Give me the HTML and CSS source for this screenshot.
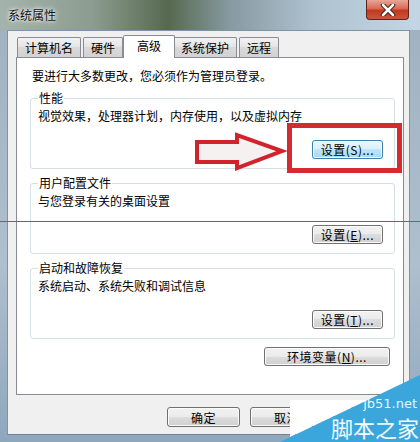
FILE: index.html
```html
<!DOCTYPE html>
<html lang="zh-CN">
<head>
  <meta charset="UTF-8" />
  <title>系统属性</title>
  <link rel="stylesheet" href="styles.css">
</head>
<body>
  <div class="window">
    <div class="titlebar">
      <span class="title">系统属性</span>
      <div class="close-btn">
        <svg width="16" height="12" viewBox="0 0 16 12"><path d="M3 1 L13 11 M13 1 L3 11" stroke="#3a1a14" stroke-width="4.5" stroke-linecap="round"/><path d="M3 1 L13 11 M13 1 L3 11" stroke="#fff" stroke-width="2.5" stroke-linecap="round"/></svg>
      </div>
    </div>

    <div class="client">
      <div class="tabs">
        <div class="tab">计算机名</div>
        <div class="tab">硬件</div>
        <div class="tab active">高级</div>
        <div class="tab">系统保护</div>
        <div class="tab">远程</div>
      </div>

      <div class="page">
        <p class="intro">要进行大多数更改，您必须作为管理员登录。</p>

        <fieldset class="group">
          <legend>性能</legend>
          <p>视觉效果，处理器计划，内存使用，以及虚拟内存</p>
          <div class="group-actions"><button class="btn focus">设置(S)...</button></div>
        </fieldset>

        <fieldset class="group">
          <legend>用户配置文件</legend>
          <p>与您登录有关的桌面设置</p>
          <div class="group-actions"><button class="btn">设置(<u>E</u>)...</button></div>
        </fieldset>

        <fieldset class="group">
          <legend>启动和故障恢复</legend>
          <p>系统启动、系统失败和调试信息</p>
          <div class="group-actions"><button class="btn">设置(<u>T</u>)...</button></div>
        </fieldset>

        <div class="env-row"><button class="btn wide">环境变量(<u>N</u>)...</button></div>
      </div>

      <div class="footer">
        <button class="btn">确定</button>
        <button class="btn">取消</button>
        <!-- third button sits fully under the watermark -->
        <button class="btn"></button>
      </div>
    </div>

    <!-- annotations drawn over the screenshot -->
    <div class="mark-line"></div>
    <div class="mark-box"></div>
    <svg class="mark-arrow" width="100" height="48" viewBox="0 0 100 48">
      <polygon points="7,14 47,14 47,7 92,23 47,40 47,34 7,34" fill="#f6f1f1" stroke="#d0232b" stroke-width="4" stroke-linejoin="miter"/>
    </svg>

    <div class="watermark">
      <svg width="140" height="70" viewBox="0 0 140 70">
        <polygon points="10,28 88,28 10,65" fill="#ffffff"/>
        <polygon points="0,70 140,3 140,70" fill="#3aa6dc"/>
      </svg>
      <span class="wm-url">jb51.net</span>
      <span class="wm-name">脚本之家</span>
    </div>
  </div>
</body>
</html>
```

FILE: styles.css
```css
body {
  margin: 0;
  font-family: "Noto Sans CJK SC", "Liberation Sans", sans-serif;
  font-size: 12px;
  color: #000;
}
.window {
  position: relative;
  width: 420px;
  height: 442px;
  overflow: hidden;
  background: linear-gradient(to bottom, #9fb1c0, #aebfce 60%, #8fa7bd);
}
.titlebar {
  height: 30px;
  display: flex;
  justify-content: space-between;
  align-items: flex-start;
  background: linear-gradient(90deg, #a4b3ac 0%, #8d9c90 22%, #56694f 40%, #889ba3 55%, #aec2d0 75%, #c4d6e3 100%);
}
.title {
  margin: 8px 0 0 8px;
  line-height: 14px;
  color: #111;
  text-shadow: 0 0 6px #fff, 0 0 3px #fff;
}
.close-btn {
  width: 41px;
  height: 19px;
  margin-right: 11px;
  border: 1px solid #5e241b;
  border-top: none;
  border-radius: 0 0 4px 4px;
  background: linear-gradient(to bottom, #eaa597 0%, #d86a55 45%, #c2391f 55%, #c9563f 100%);
  display: flex;
  justify-content: center;
  align-items: center;
}
.client {
  height: 403px;
  margin: 0 10px 0 7px;
  padding: 0 5px 0 8px;
  background: #f0f0f0;
  border: 1px solid #7f93a6;
  border-bottom-color: #6d8298;
}
.tabs {
  display: flex;
  align-items: flex-end;
  height: 26px;
  padding-left: 1px;
}
.tab {
  height: 19px;
  line-height: 19px;
  padding: 0 7px;
  margin-right: 2px;
  border: 1px solid #898c95;
  border-bottom: none;
  border-radius: 2px 2px 0 0;
  background: linear-gradient(to bottom, #f3f3f3, #e3e3e3 50%, #d9d9d9 50%, #d2d2d2);
}
.tab.active {
  height: 22px;
  line-height: 20px;
  padding: 0 13px;
  margin: 0 0 -1px -2px;
  background: #fff;
  position: relative;
}
.tab.active + .tab {
  margin-left: -2px;
}
.page {
  width: 386px;
  height: 325px;
  background: #fff;
  border: 1px solid #898c95;
  padding: 11px 0 0;
}
.intro {
  margin: 0 0 8px 15px;
  line-height: 14px;
}
.group {
  width: 345px;
  margin: 0 12px 7px 13px;
  padding: 0 11px 9px 7px;
  border: 1px solid #d5dfe5;
  border-radius: 3px;
}
.group legend {
  padding: 0 1px;
  line-height: 14px;
}
.group p {
  margin: 4px 0 0;
  line-height: 14px;
}
.group-actions {
  display: flex;
  justify-content: flex-end;
  margin-top: 17px;
}
.btn {
  height: 19px;
  min-width: 71px;
  padding: 0 8px;
  font-family: inherit;
  font-size: 12px;
  line-height: 15px;
  letter-spacing: 0.5px;
  color: #000;
  border: 1px solid #707070;
  border-radius: 3px;
  background: linear-gradient(to bottom, #f2f2f2 0%, #ebebeb 50%, #dddddd 50%, #cfcfcf 100%);
  box-shadow: inset 0 0 0 1px #fbfbfb;
}
.btn u {
  text-decoration: underline;
}
.btn.focus {
  border-color: #3c7fb1;
  background: linear-gradient(to bottom, #eaf6fd 0%, #d9f0fc 50%, #bee6fd 50%, #a7d9f5 100%);
}
.btn.wide {
  width: 126px;
}
.env-row {
  display: flex;
  justify-content: flex-end;
  margin: 8px 13px 0 0;
}
.footer {
  display: flex;
  justify-content: flex-end;
  gap: 10px;
  margin: 12px -2px 0 0;
}
.footer .btn {
  width: 73px;
  height: 20px;
}

/* red annotations */
.mark-line {
  position: absolute;
  left: 0;
  top: 221px;
  width: 420px;
  height: 1px;
  background: #c8403f;
}
.mark-box {
  position: absolute;
  left: 287px;
  top: 123px;
  width: 105px;
  height: 40px;
  border: 5px solid #d42a30;
}
.mark-arrow {
  position: absolute;
  left: 190px;
  top: 128px;
}

/* watermark */
.watermark {
  position: absolute;
  left: 280px;
  top: 372px;
  width: 140px;
  height: 70px;
}
.watermark svg {
  display: block;
}
.wm-url {
  position: absolute;
  right: 3px;
  top: 25px;
  font-family: "DejaVu Sans", sans-serif;
  font-size: 13px;
  line-height: 14px;
  color: #e8f5fc;
}
.wm-name {
  position: absolute;
  right: 1px;
  top: 44px;
  font-size: 22px;
  line-height: 22px;
  color: #f2faff;
}
```
